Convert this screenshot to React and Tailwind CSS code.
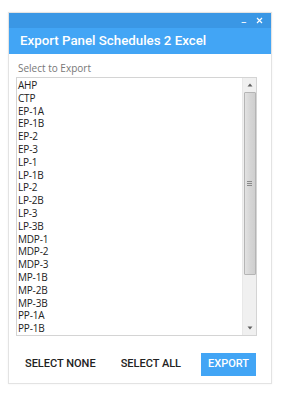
import React from 'react'

const panels = [
  'AHP', 'CTP', 'EP-1A', 'EP-1B', 'EP-2', 'EP-3', 'LP-1', 'LP-1B', 'LP-2', 'LP-2B',
  'LP-3', 'LP-3B', 'MDP-1', 'MDP-2', 'MDP-3', 'MP-1B', 'MP-2B', 'MP-3B', 'PP-1A', 'PP-1B',
]

const Scrollbar = () => (
  <div className="w-[14px] shrink-0 bg-[#f0f0f0] flex flex-col items-center border-l border-[#e8e8e8]">
    <div className="h-[14px] flex items-center justify-center">
      <svg width="6" height="4" viewBox="0 0 6 4"><path d="M3 0.5 L5.5 3.5 L0.5 3.5 Z" fill="#606060" /></svg>
    </div>
    <div className="w-[12px] h-[183px] bg-gradient-to-r from-[#e2e2e2] via-[#d6d6d6] to-[#cfcfcf] border border-[#b5b5b5] rounded-[1px] flex items-center justify-center">
      <div className="flex flex-col gap-[1px]">
        <div className="w-[5px] h-px bg-[#8a8a8a]" />
        <div className="w-[5px] h-px bg-[#8a8a8a]" />
        <div className="w-[5px] h-px bg-[#8a8a8a]" />
      </div>
    </div>
    <div className="flex-1" />
    <div className="h-[14px] flex items-center justify-center">
      <svg width="6" height="4" viewBox="0 0 6 4"><path d="M0.5 0.5 L5.5 0.5 L3 3.5 Z" fill="#606060" /></svg>
    </div>
  </div>
)

export default function App() {
  return (
    <div className="w-[281px] h-[400px] bg-white pt-[12px] pl-[8px]" style={{ fontFamily: 'Roboto, sans-serif' }}>
      <div className="w-[264px] h-[372px] border border-[#e3e3e3] bg-white flex flex-col shadow-[0_0_2px_rgba(0,0,0,0.06)]">
        {/* window chrome */}
        <div className="h-[15px] bg-[#3a97e5] flex items-center justify-end pr-[8px] gap-[10px] text-white">
          <span className="text-[10px] leading-none -mt-[3px]">_</span>
          <svg width="7" height="7" viewBox="0 0 7 7"><path d="M1 1 L6 6 M6 1 L1 6" stroke="white" strokeWidth="1.2" /></svg>
        </div>
        <div className="h-[26px] bg-[#42a5f5] flex items-center pl-[11px] pb-[1px]">
          <span className="text-white text-[13.3px] font-medium">Export Panel Schedules 2 Excel</span>
        </div>

        <div className="flex-1 flex flex-col px-[7px] pt-[6px]">
          <div className="text-[10px] text-[#777] leading-[16px] pl-[2px]" style={{ fontFamily: '"Open Sans", sans-serif' }}>
            Select to Export
          </div>
          <div className="mt-[1px] w-[241px] h-[259px] border border-[#d4d4d4] flex overflow-hidden">
            <ul className="flex-1 pl-[1px] pt-[1px] overflow-hidden" style={{ fontFamily: '"Open Sans", sans-serif' }}>
              {panels.map((p) => (
                <li key={p} className="text-[10px] leading-[12.8px] text-[#222] tracking-[-0.2px]">{p}</li>
              ))}
            </ul>
            <Scrollbar />
          </div>

          <div className="flex items-center mt-[16px] h-[24px]">
            <button className="ml-[9px] text-[11px] font-medium text-[#222]">SELECT NONE</button>
            <button className="ml-[25px] text-[11px] font-medium text-[#222]">SELECT ALL</button>
            <button className="ml-[20px] w-[55px] h-[23px] bg-[#42a5f5] text-white text-[11px] font-medium">EXPORT</button>
          </div>
        </div>
      </div>
    </div>
  )
}
